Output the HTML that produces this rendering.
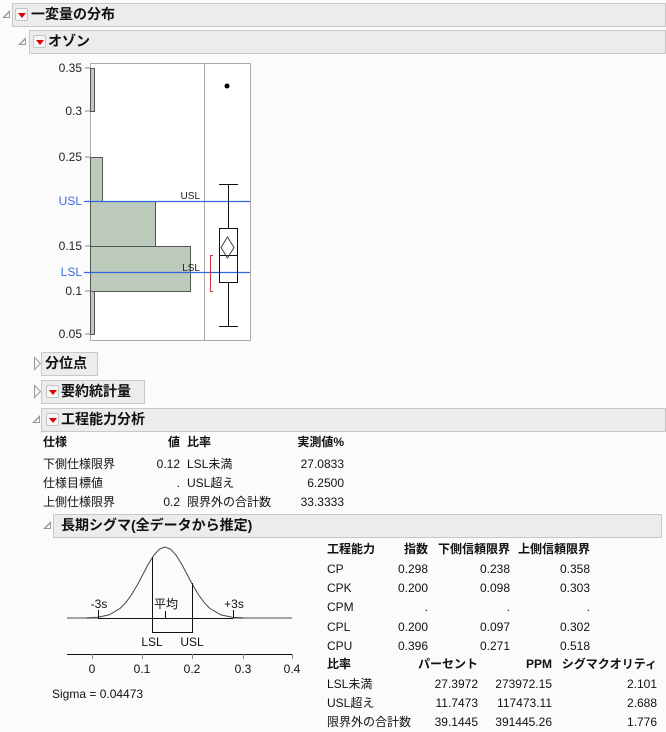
<!DOCTYPE html>
<html><head><meta charset="utf-8"><style>
body{margin:0;width:666px;height:732px;background:#fbfbfb;position:relative;overflow:hidden;font-family:"Liberation Sans","Noto Sans CJK JP",sans-serif;font-size:12px;color:#111}
.a{position:absolute;white-space:nowrap;line-height:15px;height:15px}
.hd{position:absolute;background:#ececec;border:1px solid #c8c8c8;box-sizing:border-box;height:24px}
.ht{position:absolute;font-weight:bold;font-size:14px;line-height:16px;white-space:nowrap}
.btn{position:absolute;width:13px;height:13px;background:#f6f6f6;border:1px solid #c4c4c4;border-radius:2px;box-sizing:border-box}
.btn:after{content:"";position:absolute;left:2px;top:4px;border-left:4px solid transparent;border-right:4px solid transparent;border-top:5px solid #d00}
.tri{position:absolute;width:0;height:0;border-left:8px solid transparent;border-bottom:8px solid #999}
.tri:after{content:"";position:absolute;left:-5px;top:3px;border-left:4px solid transparent;border-bottom:4px solid #fbfbfb}
.r{text-align:right}
.b{font-weight:bold}
</style></head><body>
<div class="hd" style="left:12px;top:3px;width:654px"></div>
<div class="tri" style="left:2px;top:10px"></div>
<div class="btn" style="left:15px;top:8px"></div>
<div class="ht" style="left:31px;top:6px">一変量の分布</div>

<div class="hd" style="left:29px;top:30px;width:637px"></div>
<div class="tri" style="left:18px;top:37px"></div>
<div class="btn" style="left:33px;top:35px"></div>
<div class="ht" style="left:48px;top:33px">オゾン</div>

<svg class="a" style="left:0;top:0;height:350px;line-height:normal" width="666" height="350">
<rect x="90.5" y="63.5" width="160" height="277" fill="#fff" stroke="#aaa"/>
<line x1="204.5" y1="63" x2="204.5" y2="341" stroke="#aaa"/>
<g fill="#bccbbc" stroke="#555">
<rect x="90.5" y="68.5" width="4" height="43"/>
<rect x="90.5" y="157.5" width="12" height="44"/>
<rect x="90.5" y="201.5" width="65" height="45"/>
<rect x="90.5" y="246.5" width="100" height="45"/>
<rect x="90.5" y="291.5" width="4" height="43"/>
</g>
<g stroke="#888"><line x1="85" y1="68" x2="90" y2="68"/><line x1="85" y1="111" x2="90" y2="111"/><line x1="85" y1="157" x2="90" y2="157"/><line x1="85" y1="246" x2="90" y2="246"/><line x1="85" y1="291" x2="90" y2="291"/><line x1="85" y1="334" x2="90" y2="334"/></g>
<g stroke="#3366dd" stroke-width="1.3"><line x1="84" y1="201.5" x2="250" y2="201.5"/><line x1="84" y1="272.5" x2="250" y2="272.5"/></g>
<g font-size="12" fill="#222" text-anchor="end" font-family="Liberation Sans,sans-serif">
<text x="82" y="72">0.35</text><text x="82" y="115">0.3</text><text x="82" y="161">0.25</text><text x="82" y="250">0.15</text><text x="82" y="295">0.1</text><text x="82" y="338">0.05</text>
<text x="82" y="205" fill="#3d6be0">USL</text><text x="82" y="276" fill="#3d6be0">LSL</text>
<text x="200" y="199" font-size="10">USL</text><text x="200" y="271" font-size="10">LSL</text>
</g>
<circle cx="227" cy="86" r="2.5" fill="#000"/>
<g stroke="#111" fill="none">
<line x1="228.5" y1="184" x2="228.5" y2="228"/><line x1="228.5" y1="283" x2="228.5" y2="326"/>
<line x1="219" y1="184.5" x2="238" y2="184.5"/><line x1="219" y1="326.5" x2="238" y2="326.5"/>
<rect x="219.5" y="228.5" width="18" height="54"/>
<line x1="219" y1="255.5" x2="238" y2="255.5"/>
<path d="M227.5 237 L234 247.5 L227.5 258 L221 247.5 Z" stroke="#444"/>
</g>
<path d="M213 255.5 H210.5 V291.5 H213" stroke="#d03040" fill="none"/>
<g fill="#fbfbfb" stroke="#999"><path d="M34.5 357.5 L40.5 363.5 L34.5 369.5 Z"/><path d="M34.5 385.5 L40.5 391.5 L34.5 397.5 Z"/></g>
</svg>

<div class="hd" style="left:41px;top:352px;width:57px"></div>
<div class="ht" style="left:45px;top:355px">分位点</div>

<div class="hd" style="left:41px;top:380px;width:104px"></div>
<div class="btn" style="left:46px;top:385px"></div>
<div class="ht" style="left:61px;top:383px">要約統計量</div>
<svg style="position:absolute;left:0;top:350px" width="45" height="55"><g fill="#fbfbfb" stroke="#999"><path d="M34.5 7.5 L40.5 13.5 L34.5 19.5 Z"/><path d="M34.5 35.5 L40.5 41.5 L34.5 47.5 Z"/></g></svg>

<div class="hd" style="left:41px;top:408px;width:625px"></div>
<div class="tri" style="left:32px;top:415px"></div>
<div class="btn" style="left:46px;top:413px"></div>
<div class="ht" style="left:61px;top:411px">工程能力分析</div>

<div class="a b" style="left:43px;top:435px">仕様</div>
<div class="a b r" style="left:140px;top:435px;width:40px">値</div>
<div class="a b" style="left:187px;top:435px">比率</div>
<div class="a b r" style="left:264px;top:435px;width:80px">実測値%</div>
<div class="a" style="left:43px;top:457px">下側仕様限界</div>
<div class="a r" style="left:140px;top:457px;width:40px">0.12</div>
<div class="a" style="left:187px;top:457px">LSL未満</div>
<div class="a r" style="left:264px;top:457px;width:80px">27.0833</div>
<div class="a" style="left:43px;top:476px">仕様目標値</div>
<div class="a r" style="left:140px;top:476px;width:40px">.</div>
<div class="a" style="left:187px;top:476px">USL超え</div>
<div class="a r" style="left:264px;top:476px;width:80px">6.2500</div>
<div class="a" style="left:43px;top:495px">上側仕様限界</div>
<div class="a r" style="left:140px;top:495px;width:40px">0.2</div>
<div class="a" style="left:187px;top:495px">限界外の合計数</div>
<div class="a r" style="left:264px;top:495px;width:80px">33.3333</div>

<div class="hd" style="left:53px;top:514px;width:609px"></div>
<div class="tri" style="left:43px;top:521px"></div>
<div class="ht" style="left:61px;top:517px">長期シグマ(全データから推定)</div>

<svg style="position:absolute;left:0;top:538px" width="320" height="170">
<g transform="translate(0,-538)">
<line x1="67" y1="618" x2="98" y2="618" stroke="#888" stroke-width="1.5"/>
<line x1="233" y1="618" x2="292" y2="618" stroke="#888" stroke-width="1.5"/>
<polyline fill="none" stroke="#444" points="86.6,618 97.8,617.2 109,614.9 120.2,608.4 125.8,602.6 131.4,594.9 137,585.5 142.6,575 148.2,564.4 153.8,555.3 159.4,549.2 165,547 170.6,549.2 176.2,555.3 181.8,564.4 187.4,575 193,585.5 198.6,594.9 204.2,602.6 209.8,608.4 221,614.9 232.2,617.2 243.4,618"/>
<g stroke="#111" fill="none">
<line x1="98" y1="618.5" x2="233" y2="618.5"/>
<line x1="98.5" y1="610" x2="98.5" y2="618"/><line x1="233.5" y1="610" x2="233.5" y2="618"/>
<line x1="165.5" y1="611" x2="165.5" y2="618"/>
<path d="M152.5 557 V632.5 H192.5 V583"/>
<line x1="67" y1="654.5" x2="292" y2="654.5"/>
</g>
<g stroke="#888"><line x1="92.5" y1="654" x2="92.5" y2="659"/><line x1="142.5" y1="654" x2="142.5" y2="659"/><line x1="192.5" y1="654" x2="192.5" y2="659"/><line x1="243.5" y1="654" x2="243.5" y2="659"/><line x1="292.5" y1="654" x2="292.5" y2="659"/></g>
<g font-size="12" fill="#111" text-anchor="middle" font-family="Liberation Sans,Noto Sans CJK JP,sans-serif">
<text x="99" y="608">-3s</text><text x="166" y="608">平均</text><text x="234" y="608">+3s</text>
<text x="152" y="646">LSL</text><text x="192" y="646">USL</text>
<text x="92" y="673">0</text><text x="142" y="673">0.1</text><text x="192" y="673">0.2</text><text x="243" y="673">0.3</text><text x="292" y="673">0.4</text>
</g>
</g>
</svg>
<div class="a" style="left:52px;top:687px">Sigma = 0.04473</div>

<div class="a b" style="left:327px;top:542px">工程能力</div>
<div class="a b r" style="left:380px;top:542px;width:48px">指数</div>
<div class="a b r" style="left:430px;top:542px;width:80px">下側信頼限界</div>
<div class="a b r" style="left:510px;top:542px;width:80px">上側信頼限界</div>

<div class="a" style="left:327px;top:562px">CP</div><div class="a r" style="left:380px;top:562px;width:48px">0.298</div><div class="a r" style="left:430px;top:562px;width:80px">0.238</div><div class="a r" style="left:510px;top:562px;width:80px">0.358</div>
<div class="a" style="left:327px;top:581px">CPK</div><div class="a r" style="left:380px;top:581px;width:48px">0.200</div><div class="a r" style="left:430px;top:581px;width:80px">0.098</div><div class="a r" style="left:510px;top:581px;width:80px">0.303</div>
<div class="a" style="left:327px;top:600px">CPM</div><div class="a r" style="left:380px;top:600px;width:48px">.</div><div class="a r" style="left:430px;top:600px;width:80px">.</div><div class="a r" style="left:510px;top:600px;width:80px">.</div>
<div class="a" style="left:327px;top:620px">CPL</div><div class="a r" style="left:380px;top:620px;width:48px">0.200</div><div class="a r" style="left:430px;top:620px;width:80px">0.097</div><div class="a r" style="left:510px;top:620px;width:80px">0.302</div>
<div class="a" style="left:327px;top:639px">CPU</div><div class="a r" style="left:380px;top:639px;width:48px">0.396</div><div class="a r" style="left:430px;top:639px;width:80px">0.271</div><div class="a r" style="left:510px;top:639px;width:80px">0.518</div>

<div class="a b" style="left:327px;top:657px">比率</div>
<div class="a b r" style="left:398px;top:657px;width:80px">パーセント</div>
<div class="a b r" style="left:482px;top:657px;width:70px">PPM</div>
<div class="a b r" style="left:557px;top:657px;width:100px">シグマクオリティ</div>

<div class="a" style="left:327px;top:677px">LSL未満</div><div class="a r" style="left:398px;top:677px;width:80px">27.3972</div><div class="a r" style="left:482px;top:677px;width:70px">273972.15</div><div class="a r" style="left:557px;top:677px;width:100px">2.101</div>
<div class="a" style="left:327px;top:696px">USL超え</div><div class="a r" style="left:398px;top:696px;width:80px">11.7473</div><div class="a r" style="left:482px;top:696px;width:70px">117473.11</div><div class="a r" style="left:557px;top:696px;width:100px">2.688</div>
<div class="a" style="left:327px;top:715px">限界外の合計数</div><div class="a r" style="left:398px;top:715px;width:80px">39.1445</div><div class="a r" style="left:482px;top:715px;width:70px">391445.26</div><div class="a r" style="left:557px;top:715px;width:100px">1.776</div>
</body></html>
